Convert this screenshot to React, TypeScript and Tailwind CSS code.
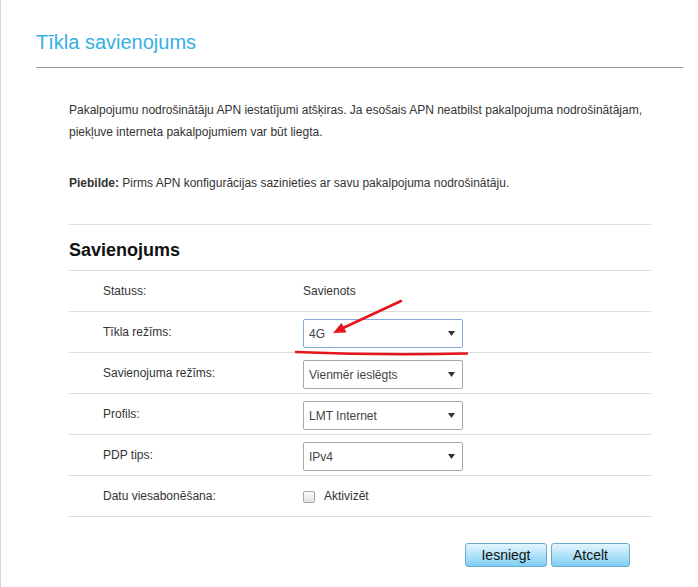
const rows: { label: string; kind: "text" | "select" | "check"; value: string; focused?: boolean }[] = [
  { label: "Statuss:", kind: "text", value: "Savienots" },
  { label: "Tīkla režīms:", kind: "select", value: "4G", focused: true },
  { label: "Savienojuma režīms:", kind: "select", value: "Vienmēr ieslēgts" },
  { label: "Profils:", kind: "select", value: "LMT Internet" },
  { label: "PDP tips:", kind: "select", value: "IPv4" },
  { label: "Datu viesabonēšana:", kind: "check", value: "Aktivizēt" },
];

const Select = ({ value, focused }: { value: string; focused?: boolean }) => (
  <div
    className={`mt-[3px] flex h-[29px] w-[160px] items-center justify-between rounded-[2px] border bg-white pl-[5px] pr-[7px] text-[12px] text-[#444] ${
      focused ? "border-[#86a9de]" : "border-[#a8a8a8]"
    }`}
  >
    <span>{value}</span>
    <svg width="7" height="5" viewBox="0 0 7 5">
      <path d="M0 0 L7 0 L3.5 5 Z" fill="#333" />
    </svg>
  </div>
);

const Button = ({ label, width }: { label: string; width: string }) => (
  <button
    className={`${width} h-[24px] rounded-[3px] border border-[#6aa8cc] bg-linear-to-b from-[#e4f5fd] to-[#7ccff3] text-[14px] leading-none text-[#111]`}
  >
    {label}
  </button>
);

export default function App() {
  return (
    <div className="relative min-h-[587px] w-[698px] overflow-hidden border-l border-[#d6d6d6] bg-white font-['Liberation_Sans',Arial,sans-serif]">
      <div className="ml-[35px] w-[647px] pt-[30px]">
        <h1 className="text-[20px] leading-[24px] text-[#36afe5]">Tīkla savienojums</h1>
        <div className="mt-[13px] h-px bg-[#9c9c9c]" />
      </div>

      <div className="ml-[68px] w-[582px] text-[12px] text-[#333]">
        <p className="mt-[31px] leading-[22px]">
          Pakalpojumu nodrošinātāju APN iestatījumi atšķiras. Ja esošais APN neatbilst pakalpojuma nodrošinātājam,
          piekļuve interneta pakalpojumiem var būt liegta.
        </p>
        <p className="mt-[29px] leading-[22px]">
          <b>Piebilde:</b> Pirms APN konfigurācijas sazinieties ar savu pakalpojuma nodrošinātāju.
        </p>

        <div className="mt-[30px] h-px bg-[#dcdcdc]" />
        <div className="flex h-[46px] items-center border-b border-[#dcdcdc] pt-[5px] text-[18px] font-bold text-[#111]">
          Savienojums
        </div>

        {rows.map((row) => (
          <div key={row.label} className="flex h-[41px] items-center border-b border-[#dcdcdc] pl-[34px]">
            <div className="w-[200px]">{row.label}</div>
            {row.kind === "text" && <div>{row.value}</div>}
            {row.kind === "select" && <Select value={row.value} focused={row.focused} />}
            {row.kind === "check" && (
              <label className="flex items-center">
                <span className="mt-[2px] h-[12px] w-[12px] rounded-[2px] border border-[#a5a5a5] bg-linear-to-b from-[#fafafa] to-[#e4e4e4]" />
                <span className="ml-[9px]">{row.value}</span>
              </label>
            )}
          </div>
        ))}

        <div className="mt-[26px] flex justify-end gap-[4px] pr-[21px]">
          <Button label="Iesniegt" width="w-[82px]" />
          <Button label="Atcelt" width="w-[79px]" />
        </div>
      </div>

      {/* red annotation drawn on top of the screenshot */}
      <svg className="pointer-events-none absolute left-0 top-0" width="698" height="587" viewBox="0 0 698 587">
        <line x1="400" y1="301" x2="342" y2="328" stroke="#e8141c" strokeWidth="2.5" strokeLinecap="round" />
        <path d="M332 333 L340.5 323 L345.5 332.5 Z" fill="#e8141c" />
        <path d="M295 352 Q380 355.5 466 353.5" stroke="#e8141c" strokeWidth="2.5" fill="none" strokeLinecap="round" />
      </svg>
    </div>
  );
}
